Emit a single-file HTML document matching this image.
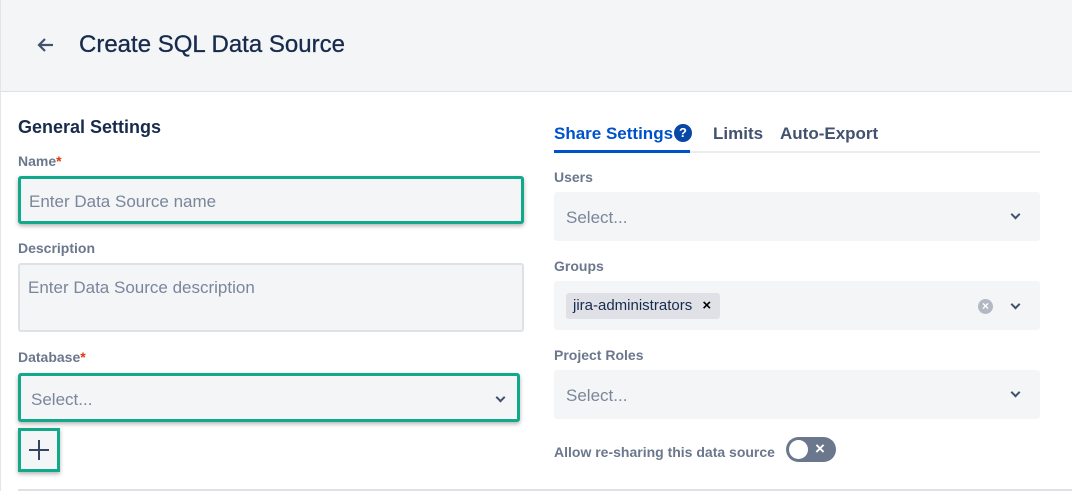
<!DOCTYPE html><html><head><style>
body{margin:0;width:1072px;height:491px;overflow:hidden;background:#fff;font-family:"Liberation Sans",sans-serif;position:relative}
.a{position:absolute}
.lbl{font-size:14px;color:#6b778c;font-weight:bold}
.inp{background:#f4f5f7;border-radius:3px;font-size:17px;color:#7a869a}
.g{border:3px solid #12a98b;box-shadow:0 2px 4px rgba(0,0,0,.3);box-sizing:border-box}
.chev{position:absolute;width:5px;height:5px;border-right:2.5px solid #42526e;border-bottom:2.5px solid #42526e;transform:rotate(45deg)}
</style></head><body>
<div class="a" style="left:0;top:0;width:1072px;height:91px;background:#f4f5f7;border-bottom:1px solid #dfe1e6"></div>
<div class="a" style="left:0;top:0;width:1px;height:491px;background:#e4e5e8"></div>
<svg class="a" style="left:36px;top:37px" width="18" height="16" viewBox="0 0 18 16"><path d="M17 8H3M9 2L3 8l6 6" stroke="#42526e" stroke-width="2.2" fill="none"/></svg>
<div class="a" style="left:79px;top:31px;font-size:24px;color:#172b4d;-webkit-text-stroke:0.3px #172b4d">Create SQL Data Source</div>
<div class="a" style="left:18px;top:117px;font-size:18px;font-weight:bold;color:#172b4d">General Settings</div>
<div class="a lbl" style="left:18px;top:153px">Name<span style="color:#de350b">*</span></div>
<div class="a inp g" style="left:18px;top:176px;width:506px;height:48px;padding:13px 0 0 8px">Enter Data Source name</div>
<div class="a lbl" style="left:18px;top:240px">Description</div>
<div class="a inp" style="left:18px;top:263px;border:2px solid #dfe1e6;padding:13px 0 0 8px;box-sizing:border-box;width:506px;height:69px">Enter Data Source description</div>
<div class="a lbl" style="left:18px;top:349px">Database<span style="color:#de350b">*</span></div>
<div class="a inp g" style="left:18px;top:373px;width:502px;height:49px;padding:14px 0 0 10px">Select...<div class="chev" style="left:476px;top:18px"></div></div>
<div class="a g" style="left:18px;top:428px;width:42px;height:44px;background:#f4f5f7"><svg style="position:absolute;left:7px;top:8px" width="22" height="22"><path d="M11 1v20M1 11h20" stroke="#344563" stroke-width="2"/></svg></div>
<div class="a" style="left:18px;top:489px;width:1054px;height:2px;background:#dfe1e6"></div>
<div class="a" style="left:554px;top:124px;font-size:17px;font-weight:bold;color:#0052cc">Share Settings</div>
<div class="a" style="left:674px;top:124px;width:18px;height:18px;border-radius:50%;background:#0747a6;color:#fff;font-size:13px;font-weight:bold;text-align:center;line-height:18px">?</div>
<div class="a" style="left:713px;top:124px;font-size:17px;font-weight:bold;color:#42526e">Limits</div>
<div class="a" style="left:780px;top:124px;font-size:17px;font-weight:bold;color:#42526e">Auto-Export</div>
<div class="a" style="left:554px;top:151px;width:486px;height:2px;background:#ebecf0"></div>
<div class="a" style="left:554px;top:150px;width:136px;height:3px;background:#0052cc"></div>
<div class="a lbl" style="left:554px;top:169px">Users</div>
<div class="a inp" style="left:554px;top:192px;width:486px;height:49px;padding:16px 0 0 12px;box-sizing:border-box">Select...<div class="chev" style="left:458px;top:19px"></div></div>
<div class="a lbl" style="left:554px;top:258px">Groups</div>
<div class="a inp" style="left:554px;top:281px;width:486px;height:49px;box-sizing:border-box"><div class="a" style="left:12px;top:12px;width:154px;height:26px;background:#dfe1e6;border-radius:3px;font-size:15px;color:#172b4d;line-height:26px;padding-left:7px;box-sizing:border-box">jira-administrators <b style="margin-left:6px;color:#000">×</b></div>
<div class="a" style="left:424px;top:18px;width:15px;height:15px;border-radius:50%;background:#b3b9c4;color:#fff;font-size:12px;text-align:center;line-height:15px;font-weight:bold">×</div><div class="chev" style="left:458px;top:20px"></div></div>
<div class="a lbl" style="left:554px;top:347px">Project Roles</div>
<div class="a inp" style="left:554px;top:370px;width:486px;height:49px;padding:16px 0 0 12px;box-sizing:border-box">Select...<div class="chev" style="left:458px;top:19px"></div></div>
<div class="a lbl" style="left:554px;top:444px">Allow re-sharing this data source</div>
<div class="a" style="left:786px;top:437px;width:50px;height:25px;border-radius:13px;background:#6b778c"><div class="a" style="left:3px;top:3px;width:19px;height:19px;border-radius:50%;background:#fff"></div><div class="a" style="left:29px;top:2px;color:#fff;font-size:17px;font-weight:bold">×</div></div>
</body></html>
